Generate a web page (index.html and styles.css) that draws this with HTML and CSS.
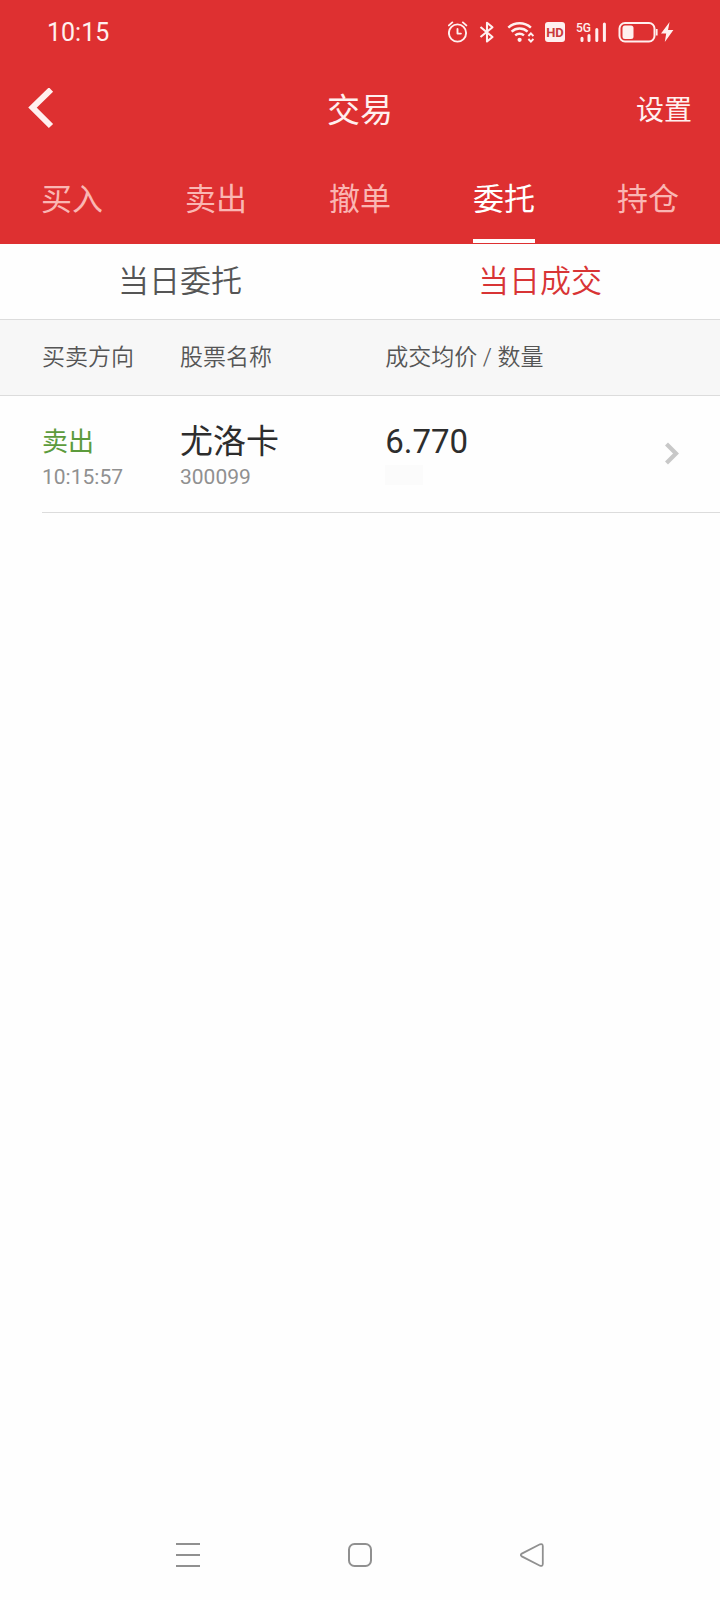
FILE: index.html
```html
<!DOCTYPE html>
<html lang="zh-CN">
<head>
<meta charset="utf-8">
<meta name="viewport" content="width=device-width, initial-scale=1">
<title>交易</title>
<link rel="stylesheet" href="styles.css">
</head>
<body>
<div class="app">
  <header class="top">
    <div class="status">
      <span class="clock">10:15</span>
      <div class="status-icons">
        <svg width="20" height="24" viewBox="0 0 20 24" fill="none" stroke="currentColor" stroke-width="1.9" stroke-linecap="round" stroke-linejoin="round"><circle cx="9.500" cy="13" r="8.6"/><path d="M9.500 9v4.6h3.4M.9 5.400l3.4-3M18.300 5.400l-3.4-3"/></svg>
        <svg width="16" height="24" viewBox="0 0 16 24" fill="none" stroke="currentColor" stroke-width="2.1" stroke-linejoin="round"><path d="M1.5 7L13.5 17L8 21.5V2.8L13.5 7.2L1.5 17"/></svg>
        <svg width="28" height="24" viewBox="0 0 28 24" fill="none" stroke="currentColor" stroke-width="2.5"><path d="M2.300 7.6a17 17 0 0 1 22.6 0M5.6 11.6a12 12 0 0 1 16 0M9.2 15.4a7 7 0 0 1 8.8 0"/><circle cx="13.6" cy="19.8" r="2.1" fill="currentColor" stroke="none"/><path d="M22.4 16l2.500-2.7 2.500 2.7M22.4 19l2.500 2.7 2.500-2.7" stroke-width="1.9"/></svg>
        <svg width="20" height="24" viewBox="0 0 20 24"><rect y="2" width="20" height="20" rx="3" fill="currentColor"/><text class="hd" x="10" y="17" text-anchor="middle">HD</text></svg>
        <svg width="31" height="24" viewBox="0 0 31 24"><text class="net" x="0" y="12">5G</text><path fill="none" stroke="currentColor" stroke-width="3" stroke-linecap="round" d="M6 18.200v2.200M13 15.6v4.8M20.8 9.6v10.8M28.4 4v16.4"/></svg>
        <svg width="56" height="24" viewBox="0 0 56 24"><rect x="1.500" y="3" width="35" height="18.500" rx="5.500" fill="none" stroke="currentColor" stroke-width="2"/><rect x="4.500" y="5.5" width="11" height="13.500" rx="2.5" fill="currentColor"/><path d="M38.700 9v6.500" stroke="currentColor" stroke-width="1.8"/><path d="M51.6 2L43 13.4h5.2L46.800 22l8.600-12h-5.4z" fill="currentColor"/></svg>
      </div>
    </div>
    <div class="bar">
      <button class="back" type="button" aria-label="返回"><svg width="26" height="42" viewBox="0 0 26 42" fill="none" stroke="currentColor" stroke-width="6"><path d="M23 1.500L4.500 19.500l18.500 18.500"/></svg></button>
      <h1 class="title">交易</h1>
      <button class="settings" type="button">设置</button>
    </div>
    <nav class="tabs">
      <a class="tab" href="#buy">买入</a>
      <a class="tab" href="#sell">卖出</a>
      <a class="tab" href="#cancel">撤单</a>
      <a class="tab active" href="#orders" aria-current="page">委托</a>
      <a class="tab" href="#positions">持仓</a>
    </nav>
  </header>
  <main class="content">
    <nav class="subtabs">
      <a class="subtab" href="#today-orders">当日委托</a>
      <a class="subtab current" href="#today-deals" aria-current="true">当日成交</a>
    </nav>
    <table class="deals">
      <thead>
        <tr><th class="side">买卖方向</th><th class="stock">股票名称</th><th class="price" colspan="2">成交均价 / 数量</th></tr>
      </thead>
      <tbody>
        <tr>
          <td class="side"><div class="main sell">卖出</div><div class="sub">10:15:57</div></td>
          <td class="stock"><div class="main">尤洛卡</div><div class="sub">300099</div></td>
          <td class="price"><div class="main">6.770</div><div class="sub"><span class="masked"></span></div></td>
          <td class="more"><button class="detail" type="button" aria-label="详情"><svg width="16" height="24" viewBox="0 0 16 24" fill="none" stroke="currentColor" stroke-width="4.200"><path d="M2.500 2l9.500 9.500-9.500 9.500"/></svg></button></td>
        </tr>
      </tbody>
    </table>
  </main>
  <footer class="system">
    <button class="key" type="button" aria-label="最近任务"><svg width="24" height="24" viewBox="0 0 24 24" stroke="currentColor" stroke-width="2"><path d="M0 1h24M0 12h24M0 23h24"/></svg></button>
    <button class="key" type="button" aria-label="主屏幕"><svg width="24" height="24" viewBox="0 0 24 24" fill="none" stroke="currentColor" stroke-width="2"><rect x="1" y="1" width="22" height="22" rx="5.500"/></svg></button>
    <button class="key" type="button" aria-label="返回上一页"><svg width="24" height="24" viewBox="0 0 24 24" fill="none" stroke="currentColor" stroke-width="1.800"><path d="M1.800 10.600L20 1.300Q22.600.400 22.800 3v18Q22.600 23.600 20 22.700L1.800 13.400Q-.200 12 1.800 10.600z"/></svg></button>
  </footer>
</div>
</body>
</html>
```

FILE: styles.css
```css
* {
  box-sizing: border-box;
}

body {
  margin: 0;
  background: #fefefe;
  color: #2d2d2d;
  font-family: Roboto, "Noto Sans CJK SC", sans-serif;
  font-weight: 400;
}

button {
  border: 0;
  padding: 0;
  background: none;
  color: inherit;
  font: inherit;
}

a {
  color: inherit;
  text-decoration: none;
}

svg {
  display: block;
}

.app {
  display: flex;
  flex-direction: column;
  min-height: 100vh;
}

.top {
  background: #de3031;
  color: #fff0ef;
}

.status {
  display: flex;
  align-items: center;
  justify-content: space-between;
  height: 64px;
  padding: 0 46px 0 47px;
}

.clock {
  font-size: 25px;
}

.status-icons {
  display: flex;
  gap: 11px;
}

.hd {
  fill: #c93b3b;
  font-size: 13px;
  font-weight: 700;
}

.net {
  fill: currentColor;
  font-size: 12px;
  font-weight: 500;
}

.bar {
  display: grid;
  grid-template-columns: 1fr auto 1fr;
  align-items: center;
  height: 90px;
  padding: 0 28px;
}

.back {
  justify-self: start;
}

.title {
  margin: 0;
  padding-top: 4px;
  font-size: 33px;
  font-weight: 400;
  line-height: 40px;
}

.settings {
  justify-self: end;
  padding-top: 4px;
  font-size: 28px;
  line-height: 40px;
}

.tabs {
  display: grid;
  grid-template-columns: repeat(5, 1fr);
  justify-items: center;
  height: 90px;
}

.tab {
  height: 89px;
  padding-top: 2px;
  border-bottom: 4px solid transparent;
  color: #fab6b3;
  font-size: 31px;
  line-height: 88px;
}

.tab.active {
  border-color: #fff;
  color: #fff;
}

.content {
  flex: 1;
}

.subtabs {
  display: grid;
  grid-template-columns: 1fr 1fr;
  border-bottom: 1px solid #dcdcdc;
  text-align: center;
}

.subtab {
  padding-top: 1px;
  color: #555;
  font-size: 31px;
  font-weight: 350;
  line-height: 74px;
}

.subtab.current {
  color: #d83435;
}

.deals {
  width: 100%;
  border-collapse: collapse;
  table-layout: fixed;
  text-align: left;
}

.deals th {
  height: 75px;
  padding: 0 0 4px;
  border-bottom: 1px solid #dcdcdc;
  background: #f7f7f7;
  color: #555;
  font-size: 23px;
  font-weight: 350;
}

.deals td {
  padding: 23px 0;
}

.deals .side {
  width: 25%;
  padding-left: 42px;
}

.deals .stock {
  width: 28.5%;
}

.deals tbody tr {
  background: linear-gradient(#dcdcdc, #dcdcdc) 42px 100% / 100% 1px no-repeat;
}

.main {
  font-size: 33px;
  font-weight: 400;
  line-height: 46px;
}

.main.sell {
  color: #5c9b3c;
  font-size: 26px;
}

.sub {
  height: 25px;
  color: #909090;
  font-size: 21px;
  font-weight: 400;
  line-height: 25px;
}

.masked {
  display: block;
  width: 38px;
  height: 20px;
  background: #fbfbfb;
}

.deals .more {
  padding-right: 40px;
}

.detail {
  display: block;
  margin-left: auto;
  color: #c8c8c8;
}

.system {
  display: flex;
  justify-content: center;
  gap: 148px;
  padding: 33px 0;
  color: #909090;
}
```
